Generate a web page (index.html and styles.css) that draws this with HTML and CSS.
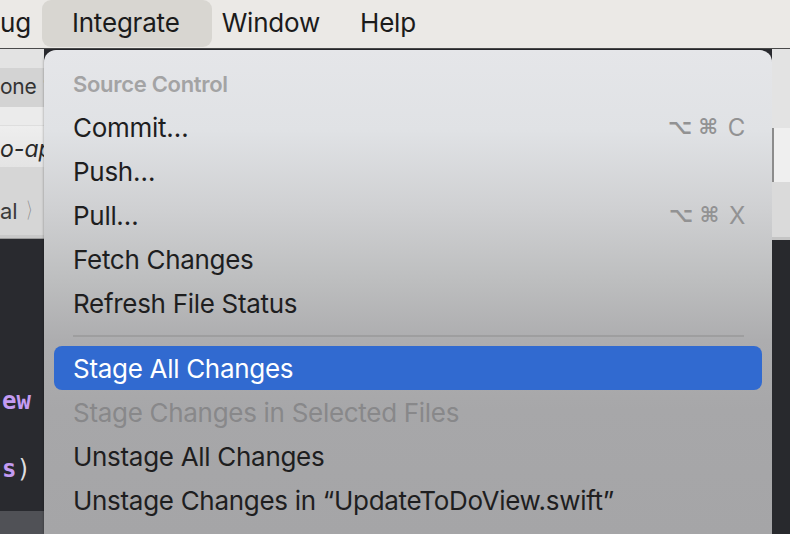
FILE: index.html
```html
<!DOCTYPE html>
<html>
<head>
<meta charset="utf-8">
<link rel="stylesheet" href="styles.css">
</head>
<body>
<div class="screen">
  <header class="menubar">
    <span class="mb-item mb-first">ug</span>
    <span class="mb-item mb-active">Integrate</span>
    <span class="mb-item mb-window">Window</span>
    <span class="mb-item mb-help">Help</span>
  </header>
  <div class="below">
    <div class="left-strip">
      <div class="ls-top"></div>
      <div class="ls-device"><span>one</span><span class="ls-dim">1</span></div>
      <div class="ls-gap"></div>
      <div class="ls-path">o-ap</div>
      <div class="ls-crumb">al <span class="chev">〉</span></div>
      <div class="ls-edge"></div>
      <div class="editor">
        <div class="code-line"><span class="t-type">ew</span></div>
        <div class="code-line"></div>
        <div class="code-line"><span class="t-type">s</span><span class="t-plain">)</span></div>
        <div class="editor-fill"></div>
        <div class="code-line current"><span class="t-proj">eDo</span></div>
      </div>
    </div>
    <div class="menu">
      <div class="menu-header">Source Control</div>
      <div class="menu-item"><span>Commit…</span><span class="shortcut"><span class="sym">⌥</span><span class="sym">⌘</span><span class="key">C</span></span></div>
      <div class="menu-item"><span>Push…</span></div>
      <div class="menu-item"><span>Pull…</span><span class="shortcut"><span class="sym">⌥</span><span class="sym">⌘</span><span class="key">X</span></span></div>
      <div class="menu-item"><span>Fetch Changes</span></div>
      <div class="menu-item"><span>Refresh File Status</span></div>
      <div class="menu-sep"></div>
      <div class="menu-item selected"><span>Stage All Changes</span></div>
      <div class="menu-item disabled"><span>Stage Changes in Selected Files</span></div>
      <div class="menu-item"><span>Unstage All Changes</span></div>
      <div class="menu-item"><span>Unstage Changes in “UpdateToDoView.swift”</span></div>
    </div>
    <div class="right-strip">
      <div class="rs-a"></div>
      <div class="rs-b"></div>
      <div class="rs-c"></div>
      <div class="rs-edge"></div>
      <div class="rs-dark"></div>
    </div>
  </div>
</div>
</body>
</html>
```

FILE: styles.css
```css
* { box-sizing: border-box; }
html, body { margin: 0; padding: 0; }
body {
  width: 790px;
  height: 534px;
  overflow: hidden;
  font-family: Inter, "Noto Sans", "DejaVu Sans", sans-serif;
  background: #292a2f;
}
.screen { width: 790px; height: 534px; overflow: hidden; display: flex; flex-direction: column; }

/* menu bar */
.menubar {
  height: 49px;
  flex: none;
  display: flex;
  align-items: stretch;
  background: #ebe9e6;
  border-bottom: 1px solid #4a4a4a;
  font-size: 26px;
  color: #1b1b1b;
  letter-spacing: -0.2px;
}
.mb-item { display: flex; align-items: center; padding-bottom: 3px; }
.mb-first { padding-right: 11px; }
.mb-active { padding: 0 32px 3px 30px; background: #d8d6d1; border-radius: 9px; margin-bottom: 1px; }
.mb-window { padding-left: 10px; }
.mb-help { margin-left: 40px; }

.below { flex: 1; display: flex; min-height: 0; }

/* left strip (window behind) */
.left-strip { width: 44px; flex: none; display: flex; flex-direction: column; overflow: hidden; white-space: nowrap; }
.ls-top { height: 19px; background: #e3e3e3; flex: none; }
.ls-device { height: 39px; flex: none; background: #d3d3d3; font-size: 21px; color: #333; display: flex; align-items: center; padding-bottom: 2px; letter-spacing: -0.3px; }
.ls-dim { color: #666; margin-left: 7px; }
.ls-gap { height: 19px; flex: none; background: #ebebeb; border-bottom: 1px solid #dedede; }
.ls-path { height: 41px; flex: none; background: linear-gradient(#eeeeee, #e4e4e4); font-size: 23px; font-style: italic; color: #2a2a2a; display: flex; align-items: center; margin-left: -3px; padding-left: 3px; padding-top: 4px; }
.ls-crumb { height: 68px; flex: none; background: #d6d6d6; font-size: 22px; color: #3a3a3a; display: flex; align-items: center; padding-top: 20px; }
.chev { color: #6f6f6f; font-size: 22px; margin-left: 4px; font-family: "DejaVu Sans", sans-serif; transform: scaleX(0.6); display: inline-block; }
.ls-edge { height: 4px; flex: none; background: #c9c9c9; border-bottom: 1px solid #9a9a9a; }
.editor { flex: 1; background: #292a2f; display: flex; flex-direction: column; padding-top: 145px; font-family: "DejaVu Sans Mono", "Liberation Mono", monospace; font-size: 24px; }
.code-line { height: 34px; flex: none; display: flex; align-items: center; padding-left: 2px; }
.editor-fill { height: 25px; flex: none; }
.code-line.current { background: #505156; align-items: flex-end; }
.t-type { color: #c39bf2; font-weight: bold; }
.t-plain { color: #dededf; }
.t-proj { color: #8fd8c8; margin-bottom: -14px; }

/* dropdown menu */
.menu {
  width: 728px;
  flex: none;
  margin-top: 1px;
  border-radius: 12px 12px 0 0;
  background: linear-gradient(180deg, #e5e6e9 0px, #e0e2e5 80px, #cfd0d2 160px, #bdbebf 230px, #adadaf 290px, #a7a7a9 360px, #a5a5a7 484px);
  padding: 11px 10px 0;
  box-shadow: -1px 0 2px rgba(0,0,0,0.18), 0 -1px 0 rgba(0,0,0,0.06);
  color: #1e1e1f;
  letter-spacing: -0.3px;
}
.menu-header { height: 44px; display: flex; align-items: center; padding-left: 19px; font-size: 22px; font-weight: 600; color: #a3a3a4; padding-top: 2px; }
.menu-item {
  height: 44px;
  display: flex;
  align-items: center;
  justify-content: space-between;
  padding: 0 17px 0 19px;
  font-size: 26px;
  border-radius: 8px;
}
.menu-item.selected { background: #316ad0; color: #ffffff; }
.menu-item.disabled { color: #88888a; }
.menu-sep { height: 21px; display: flex; align-items: center; padding: 0 18px 0 19px; }
.menu-sep::before { content: ""; display: block; height: 2px; width: 100%; background: #9e9e9f; }
.shortcut { display: flex; gap: 7px; align-items: center; color: #929293; font-size: 24px; }
.shortcut .sym { font-family: "DejaVu Sans", sans-serif; font-size: 21px; font-weight: bold; }
.shortcut .key { font-family: Inter, sans-serif; margin-left: 3px; }

/* right strip */
.right-strip { flex: 1; display: flex; flex-direction: column; }
.rs-a { height: 79px; flex: none; background: #e3e3e3; }
.rs-b { height: 54px; flex: none; background: #efefef; border-left: 2px solid #8c8c8c; }
.rs-c { height: 55px; flex: none; background: #dadada; }
.rs-edge { height: 3px; flex: none; background: #c4c4c4; }
.rs-dark { flex: 1; background: #28292d; }
```
